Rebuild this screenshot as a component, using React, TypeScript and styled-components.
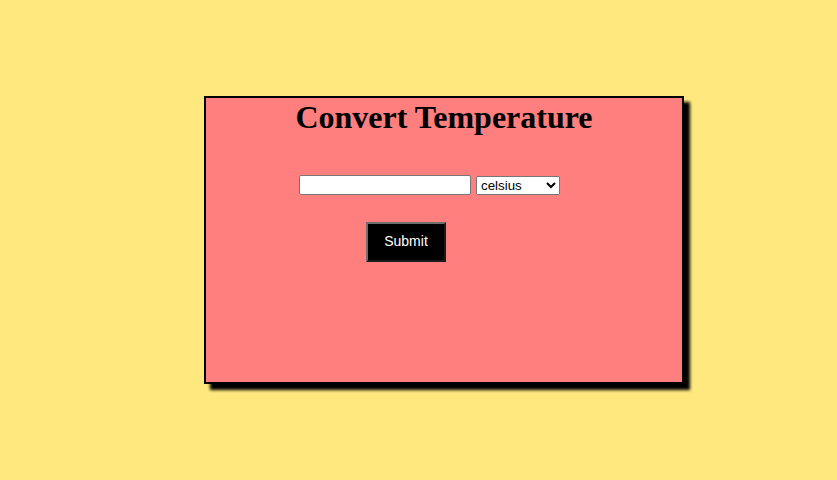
import styled, { createGlobalStyle } from 'styled-components';

const GlobalStyle = createGlobalStyle`
  html, body {
    margin: 0;
    padding: 0;
    background-color: #ffe97f;
  }
`;

const Page = styled.div`
  min-height: 480px;
  padding: 96px 0 0 204px;
  box-sizing: border-box;
`;

const Card = styled.div`
  width: 476px;
  height: 284px;
  background-color: #ff7f7f;
  border: 2px solid black;
  box-shadow: 6px 6px 3px black;
`;

const Title = styled.h1`
  margin: 0;
  font-family: 'Liberation Serif', 'Times New Roman', serif;
  font-size: 32px;
  font-weight: 700;
  line-height: 38px;
  text-align: center;
  color: black;
`;

const Form = styled.form`
  display: flex;
  flex-direction: column;
  align-items: flex-start;
  padding-left: 93px;
`;

const Row = styled.div`
  display: flex;
  align-items: center;
  gap: 5px;
  margin-top: 39px;
`;

const Input = styled.input`
  box-sizing: border-box;
  width: 172px;
  height: 20px;
  padding: 1px 2px;
  border: 1px solid #767676;
  border-radius: 2px;
  background: white;
  font-family: 'Liberation Sans', Arial, sans-serif;
  font-size: 13.33px;
`;

const Select = styled.select`
  box-sizing: border-box;
  width: 84px;
  height: 19px;
  font-family: 'Liberation Sans', Arial, sans-serif;
  font-size: 13.33px;
`;

const Button = styled.button`
  box-sizing: border-box;
  width: 80px;
  height: 40px;
  margin: 27px 0 0 67px;
  padding: 0 0 2px;
  background-color: black;
  color: white;
  border: 2px outset #6f6f6f;
  font-family: 'Liberation Sans', Arial, sans-serif;
  font-size: 14px;
  cursor: pointer;
`;

export default function App() {
  return (
    <>
      <GlobalStyle />
      <Page>
        <Card>
          <Title>Convert Temperature</Title>
          <Form onSubmit={(e) => e.preventDefault()}>
            <Row>
              <Input type="text" />
              <Select defaultValue="celsius">
                <option value="celsius">celsius</option>
                <option value="fahrenheit">fahrenheit</option>
              </Select>
            </Row>
            <Button type="submit">Submit</Button>
          </Form>
        </Card>
      </Page>
    </>
  );
}
